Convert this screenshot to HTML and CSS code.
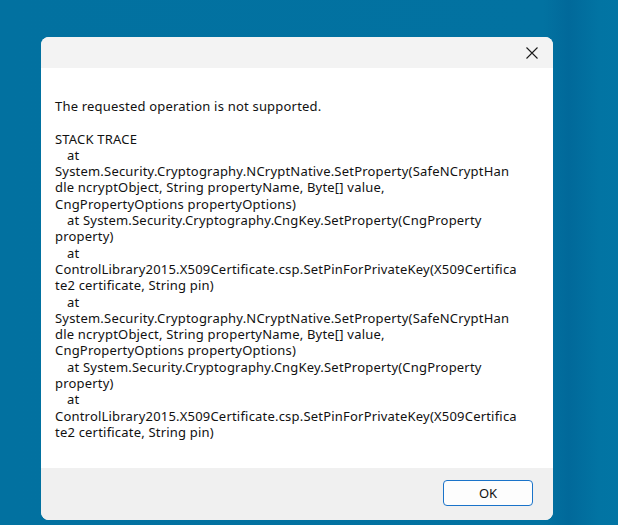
FILE: index.html
```html
<!DOCTYPE html>
<html>
<head>
<meta charset="utf-8">
<link rel="stylesheet" href="styles.css">
</head>
<body>
<div class="dialog">
  <div class="titlebar">
    <button class="close" aria-label="Close">
      <svg width="12" height="12" viewBox="0 0 12 12"><path d="M0.5 0.5L11.5 11.5M11.5 0.5L0.5 11.5" stroke="#1b1b1b" stroke-width="1.1" fill="none"/></svg>
    </button>
  </div>
  <div class="content">
    <div class="msg">
      <div class="line">The requested operation is not supported.</div>
      <div class="line">&nbsp;</div>
      <div class="line">STACK TRACE</div>
      <div class="line indent">at</div>
      <div class="line">System.Security.Cryptography.NCryptNative.SetProperty(SafeNCryptHan</div>
      <div class="line">dle ncryptObject, String propertyName, Byte[] value,</div>
      <div class="line">CngPropertyOptions propertyOptions)</div>
      <div class="line indent">at System.Security.Cryptography.CngKey.SetProperty(CngProperty</div>
      <div class="line">property)</div>
      <div class="line indent">at</div>
      <div class="line">ControlLibrary2015.X509Certificate.csp.SetPinForPrivateKey(X509Certifica</div>
      <div class="line">te2 certificate, String pin)</div>
      <div class="line indent">at</div>
      <div class="line">System.Security.Cryptography.NCryptNative.SetProperty(SafeNCryptHan</div>
      <div class="line">dle ncryptObject, String propertyName, Byte[] value,</div>
      <div class="line">CngPropertyOptions propertyOptions)</div>
      <div class="line indent">at System.Security.Cryptography.CngKey.SetProperty(CngProperty</div>
      <div class="line">property)</div>
      <div class="line indent">at</div>
      <div class="line">ControlLibrary2015.X509Certificate.csp.SetPinForPrivateKey(X509Certifica</div>
      <div class="line">te2 certificate, String pin)</div>
    </div>
  </div>
  <div class="footer">
    <button class="ok">OK</button>
  </div>
</div>
</body>
</html>
```

FILE: styles.css
```css
html, body {
  margin: 0;
  padding: 0;
}
body {
  width: 618px;
  height: 525px;
  overflow: hidden;
  background: linear-gradient(90deg, #0271a0 0%, #0272a1 88%, #01699a 92%, #0274a3 97%, #0275a4 100%);
  padding: 37px 0 0 41px;
  box-sizing: border-box;
  font-family: "Noto Sans", "Open Sans", sans-serif;
}
.dialog {
  width: 512px;
  height: 483px;
  border-radius: 8px;
  overflow: hidden;
  display: flex;
  flex-direction: column;
  background: #ffffff;
}
.titlebar {
  height: 31px;
  flex-shrink: 0;
  background: #f3f3f3;
  display: flex;
  justify-content: flex-end;
  align-items: flex-start;
}
.close {
  border: 0;
  background: transparent;
  padding: 0;
  margin: 10px 15px 0 0;
  width: 12px;
  height: 12px;
  display: block;
}
.close svg {
  display: block;
}
.content {
  flex: 1;
  min-height: 0;
  padding: 30px 10px 0 14px;
  background: #ffffff;
}
.msg {
  font-size: 13px;
  letter-spacing: 0.2px;
  line-height: 16.3px;
  color: #111;
}
.line {
  white-space: pre;
  height: 16.3px;
}
.line.indent {
  padding-left: 12px;
}
.footer {
  height: 52px;
  flex-shrink: 0;
  background: #f0f0f0;
  display: flex;
  justify-content: flex-end;
  align-items: flex-start;
  padding: 12px 20px 0 0;
  box-sizing: border-box;
}
.ok {
  width: 90px;
  height: 26px;
  border: 1px solid #1a73c9;
  border-radius: 4px;
  background: #fdfdfd;
  font-family: "Noto Sans", "Open Sans", sans-serif;
  font-size: 13px;
  color: #111;
  padding: 0;
}
```
